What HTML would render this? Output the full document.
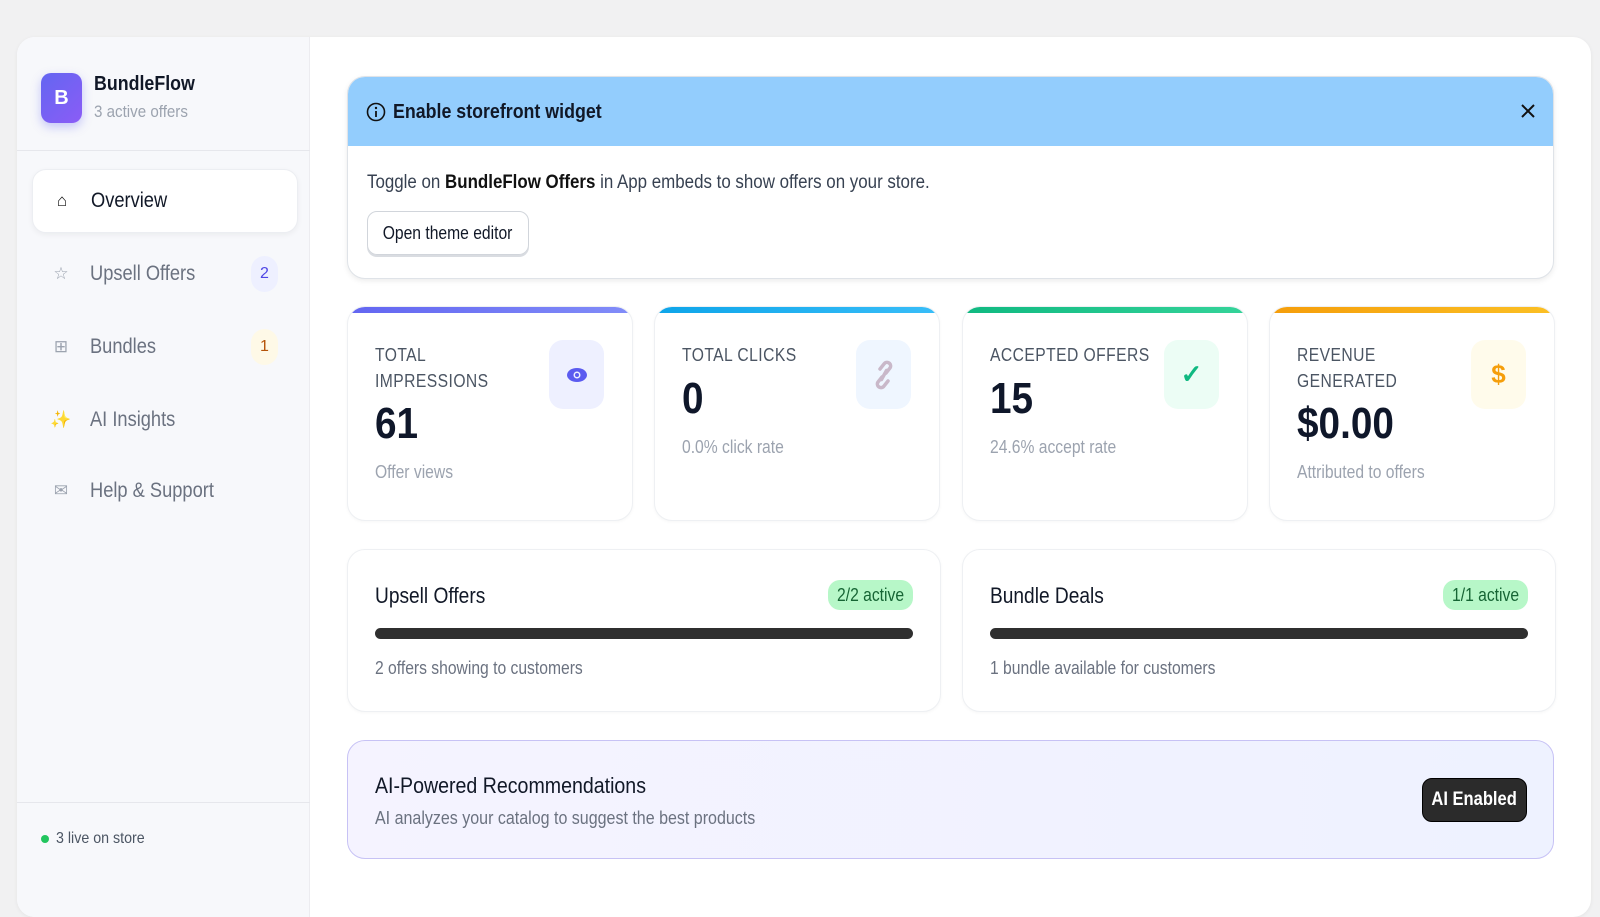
<!DOCTYPE html>
<html><head><meta charset="utf-8"><style>
*{box-sizing:border-box;margin:0;padding:0}
body{width:1600px;height:900px;overflow:hidden;background:#f1f1f2;font-family:"Liberation Sans",sans-serif;color:#111827;position:relative}
.abs{position:absolute}
.c{display:inline-block;transform:scaleX(.89);transform-origin:0 50%;white-space:nowrap}
.panel{left:17px;top:37px;width:1574px;height:880px;background:#fff;border-radius:18px;box-shadow:0 1px 4px rgba(0,0,0,.06);overflow:hidden}
.side{left:0;top:0;width:293px;height:880px;background:#f7f8fb;border-right:1px solid #ececf0}
.logo{left:24px;top:36px;width:41px;height:50px;border-radius:10px;background:linear-gradient(135deg,#6366f1,#8b5cf6);color:#fff;font-weight:bold;font-size:20px;display:flex;align-items:center;justify-content:center;box-shadow:0 4px 10px rgba(99,102,241,.35)}
.nav{left:15px;width:266px;height:64px;display:flex;align-items:center;font-size:21px;color:#6b7280}
.nav .ic{width:34px;margin-left:12px;text-align:center;color:#9ca3af;font-size:17px}
.nav .tx{margin-left:12px;display:inline-block;transform:scaleX(.87);transform-origin:0 50%;white-space:nowrap}
.badge{position:absolute;right:20px;width:27px;height:36px;border-radius:14px;display:flex;align-items:center;justify-content:center;font-size:16px}
.card{background:#fff;border:1px solid #eef0f3;border-radius:18px;box-shadow:0 1px 3px rgba(0,0,0,.04)}
.stat{top:269px;width:286px;height:215px;overflow:hidden}
.stat .bar{position:absolute;left:4px;right:4px;top:0;height:6px;border-radius:6px 6px 0 0}
.stat .lbl{position:absolute;left:27px;top:35px;font-size:18px;color:#4b5563;letter-spacing:.5px;line-height:26px;transform:scaleX(.87);transform-origin:0 0;white-space:nowrap}
.stat .num{position:absolute;left:27px;font-size:44px;font-weight:bold;color:#0f172a;transform:scaleX(.88);transform-origin:0 0}
.stat .sub{position:absolute;left:27px;font-size:18px;color:#9ca3af;transform:scaleX(.87);transform-origin:0 0;white-space:nowrap}
.stat .icb{position:absolute;right:28px;top:33px;width:55px;height:69px;border-radius:14px;display:flex;align-items:center;justify-content:center;font-size:26px}
.sum{top:512px;width:594px;height:163px}
.sum .t{position:absolute;left:27px;top:33px;font-size:22px;color:#111827;transform:scaleX(.87);transform-origin:0 0;white-space:nowrap}
.sum .b{position:absolute;right:27px;top:30px;height:30px;width:85px;border-radius:12px;background:#b7f7c8;color:#166534;font-size:18px;display:flex;align-items:center;justify-content:center}
.sum .b span{display:inline-block;transform:scaleX(.87);white-space:nowrap}
.sum .pb{position:absolute;left:27px;right:27px;top:78px;height:11px;border-radius:6px;background:#2f2f2f}
.sum .s{position:absolute;left:27px;top:108px;font-size:18px;color:#6b7280;transform:scaleX(.87);transform-origin:0 0;white-space:nowrap}
</style></head><body>
<div class="abs panel">
  <div class="abs side">
    <div class="abs logo">B</div>
    <div class="abs c" style="left:77px;top:36px;font-size:20px;font-weight:bold">BundleFlow</div>
    <div class="abs c" style="left:77px;top:65px;font-size:17px;color:#9ca3af">3 active offers</div>
    <div class="abs" style="left:0;top:113px;width:293px;height:1px;background:#e6e7ec"></div>
    <div class="abs nav" style="top:132px;background:#fff;border:1px solid #eceef2;border-radius:14px;box-shadow:0 2px 6px rgba(0,0,0,.05);color:#111827"><span class="ic" style="color:#111">⌂</span><span class="tx">Overview</span></div>
    <div class="abs nav" style="top:205px"><span class="ic">☆</span><span class="tx">Upsell Offers</span><span class="badge" style="background:#eef0ff;color:#4f46e5">2</span></div>
    <div class="abs nav" style="top:278px"><span class="ic">⊞</span><span class="tx">Bundles</span><span class="badge" style="background:#fef9e7;color:#b45309">1</span></div>
    <div class="abs nav" style="top:351px"><span class="ic" style="color:#fbbf24">✨</span><span class="tx">AI Insights</span></div>
    <div class="abs nav" style="top:422px"><span class="ic">✉</span><span class="tx">Help &amp; Support</span></div>
    <div class="abs" style="left:0;top:765px;width:293px;height:1px;background:#e6e7ec"></div>
    <div class="abs" style="left:24px;top:798px;width:8px;height:8px;border-radius:50%;background:#22c55e"></div>
    <div class="abs c" style="left:39px;top:793px;font-size:16px;color:#4b5563">3 live on store</div>
  </div>
  <div class="abs card" style="left:330px;top:39px;width:1207px;height:203px;overflow:hidden;box-shadow:0 2px 6px rgba(0,0,0,.08);border-color:#dfe3e8">
    <div class="abs" style="left:0;top:0;width:100%;height:69px;background:#93cdfd"></div>
    <svg class="abs" style="left:18px;top:25px" width="20" height="20" viewBox="0 0 20 20"><circle cx="10" cy="10" r="8.5" fill="none" stroke="#111" stroke-width="1.6"/><circle cx="10" cy="6" r="1.2" fill="#111"/><path d="M10 9v6" stroke="#111" stroke-width="1.8"/></svg>
    <div class="abs c" style="left:45px;top:24px;font-size:20px;font-weight:bold">Enable storefront widget</div>
    <svg class="abs" style="left:1172px;top:26px" width="16" height="16" viewBox="0 0 16 16"><path d="M2 2L14 14M14 2L2 14" stroke="#111" stroke-width="2"/></svg>
    <div class="abs c" style="left:19px;top:95px;font-size:19px;color:#374151">Toggle on <b style="color:#111">BundleFlow Offers</b> in App embeds to show offers on your store.</div>
    <div class="abs" style="left:19px;top:134px;width:162px;height:44px;border:1px solid #d1d5db;border-radius:10px;box-shadow:0 2px 0 #d9dce1;display:flex;align-items:center;justify-content:center;font-size:18px"><span style="display:inline-block;transform:scaleX(.87);white-space:nowrap">Open theme editor</span></div>
  </div>
  <div class="abs card stat" style="left:330px"><div class="bar" style="background:linear-gradient(90deg,#6366f1,#818cf8)"></div><div class="lbl">TOTAL<br>IMPRESSIONS</div><div class="num" style="top:92px">61</div><div class="sub" style="top:155px">Offer views</div><div class="icb" style="background:#eef0ff;color:#5b5bf0"><svg width="22" height="16" viewBox="0 0 22 16"><ellipse cx="11" cy="8" rx="10" ry="7" fill="#5b5bf0"/><circle cx="11" cy="8" r="3.5" fill="#eef0ff"/><circle cx="11" cy="8" r="2" fill="#5b5bf0"/></svg></div></div>
  <div class="abs card stat" style="left:637px"><div class="bar" style="background:linear-gradient(90deg,#0ea5e9,#38bdf8)"></div><div class="lbl">TOTAL CLICKS</div><div class="num" style="top:67px">0</div><div class="sub" style="top:130px">0.0% click rate</div><div class="icb" style="background:#eff6ff"><svg width="26" height="30" viewBox="0 0 26 30"><g fill="none" stroke="#c9b8c9" stroke-width="3.5" stroke-linecap="round"><path d="M11 17l-4 5a3.5 3.5 0 0 0 6 4l4-5"/><path d="M15 13l4-5a3.5 3.5 0 0 0-6-4l-4 5"/><path d="M10.5 19.5l5-9"/></g></svg></div></div>
  <div class="abs card stat" style="left:945px"><div class="bar" style="background:linear-gradient(90deg,#10b981,#34d399)"></div><div class="lbl">ACCEPTED OFFERS</div><div class="num" style="top:67px">15</div><div class="sub" style="top:130px">24.6% accept rate</div><div class="icb" style="background:#ecfdf5;color:#10b981;font-weight:bold">✓</div></div>
  <div class="abs card stat" style="left:1252px"><div class="bar" style="background:linear-gradient(90deg,#f59e0b,#fbbf24)"></div><div class="lbl">REVENUE<br>GENERATED</div><div class="num" style="top:92px">$0.00</div><div class="sub" style="top:155px">Attributed to offers</div><div class="icb" style="background:#fffbeb;color:#f59e0b;font-weight:bold">$</div></div>
  <div class="abs card sum" style="left:330px"><div class="t">Upsell Offers</div><div class="b"><span>2/2 active</span></div><div class="pb"></div><div class="s">2 offers showing to customers</div></div>
  <div class="abs card sum" style="left:945px"><div class="t">Bundle Deals</div><div class="b"><span>1/1 active</span></div><div class="pb"></div><div class="s">1 bundle available for customers</div></div>
  <div class="abs" style="left:330px;top:703px;width:1207px;height:119px;border:1px solid #c7c2f5;border-radius:18px;background:linear-gradient(90deg,#f5f3ff,#eef2ff)">
    <div class="abs c" style="left:27px;top:32px;font-size:22px">AI-Powered Recommendations</div>
    <div class="abs c" style="left:27px;top:67px;font-size:18px;color:#6b7280">AI analyzes your catalog to suggest the best products</div>
    <div class="abs" style="left:1074px;top:37px;width:105px;height:44px;border-radius:10px;background:#2b2b2b;border:1px solid #000;color:#fff;font-size:19px;font-weight:bold;display:flex;align-items:center;justify-content:center"><span style="display:inline-block;transform:scaleX(.87);white-space:nowrap">AI Enabled</span></div>
  </div>
</div>
</body></html>
